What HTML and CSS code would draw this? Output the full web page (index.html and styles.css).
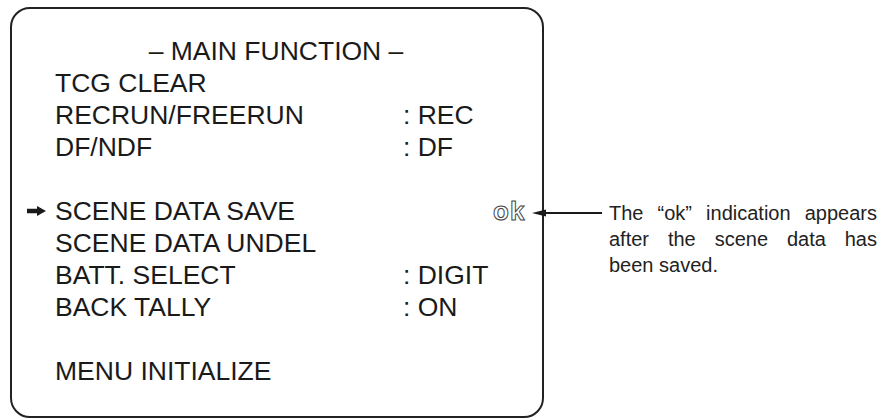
FILE: index.html
```html
<!DOCTYPE html>
<html>
<head>
<meta charset="utf-8">
<link rel="stylesheet" href="styles.css">
</head>
<body>
<div class="stage">
  <div class="screen">
    <div class="title">– MAIN FUNCTION –</div>
    <div class="menu">
      <div class="row"><span class="mark"></span><span class="label">TCG CLEAR</span><span class="value"></span></div>
      <div class="row"><span class="mark"></span><span class="label">RECRUN/FREERUN</span><span class="value">: REC</span></div>
      <div class="row"><span class="mark"></span><span class="label">DF/NDF</span><span class="value">: DF</span></div>
      <div class="row blank"></div>
      <div class="row current">
        <span class="mark"><svg width="19" height="10" viewBox="0 0 19 10"><path d="M0 2.8 H10 V0 L19 5 L10 10 V7.2 H0 Z" fill="#1a1a1a"/></svg></span>
        <span class="label">SCENE DATA SAVE</span><span class="value"></span>
        <span class="ok">ok</span>
        <div class="callout">
          <svg class="leader" width="70" height="10" viewBox="0 0 70 10"><path d="M0 5 L14 1.5 L14 8.5 Z" fill="#1a1a1a"/><rect x="12" y="4" width="58" height="2" fill="#1a1a1a"/></svg>
          <p class="note"><span class="line">The “ok” indication appears</span><span class="line">after the scene data has</span><span class="line last">been saved.</span></p>
        </div>
      </div>
      <div class="row"><span class="mark"></span><span class="label">SCENE DATA UNDEL</span><span class="value"></span></div>
      <div class="row"><span class="mark"></span><span class="label">BATT. SELECT</span><span class="value">: DIGIT</span></div>
      <div class="row"><span class="mark"></span><span class="label">BACK TALLY</span><span class="value">: ON</span></div>
      <div class="row blank"></div>
      <div class="row"><span class="mark"></span><span class="label">MENU INITIALIZE</span><span class="value"></span></div>
    </div>
  </div>
</div>
</body>
</html>
```

FILE: styles.css
```css
html, body {
  margin: 0;
  padding: 0;
  background: #ffffff;
}
body {
  width: 891px;
  height: 418px;
  overflow: hidden;
  font-family: "Liberation Sans", Arial, sans-serif;
  color: #1a1a1a;
}
.stage {
  padding: 7px 0 0 10px;
}
.screen {
  box-sizing: border-box;
  width: 534px;
  height: 411px;
  border: 2px solid #222;
  border-radius: 20px;
  padding: 26px 0 0 0;
  font-size: 26.5px;
  line-height: 32px;
}
.title {
  text-align: center;
  padding-right: 2px;
}
.menu {
  display: flex;
  flex-direction: column;
}
.row {
  display: grid;
  grid-template-columns: 43px 348px 120px;
  height: 32px;
  align-items: center;
  position: relative;
}
.mark {
  display: flex;
  justify-content: flex-end;
  align-items: center;
  padding-right: 9px;
}
.mark svg {
  display: block;
}
.ok {
  position: absolute;
  left: 481px;
  top: 0;
  font-size: 26px;
  font-weight: bold;
  letter-spacing: 1px;
  color: #ffffff;
  -webkit-text-stroke: 1px #444;
}
.callout {
  position: absolute;
  left: 520px;
  top: 5px;
  display: flex;
  align-items: flex-start;
}
.leader {
  display: block;
  flex: none;
  margin-top: 8px;
}
.note {
  margin: 0 0 0 7px;
  width: 268px;
  font-size: 20px;
  line-height: 26px;
  color: #222;
}
.line {
  display: block;
  text-align: justify;
  text-align-last: justify;
  white-space: nowrap;
}
.line.last {
  text-align: left;
  text-align-last: left;
}
```
